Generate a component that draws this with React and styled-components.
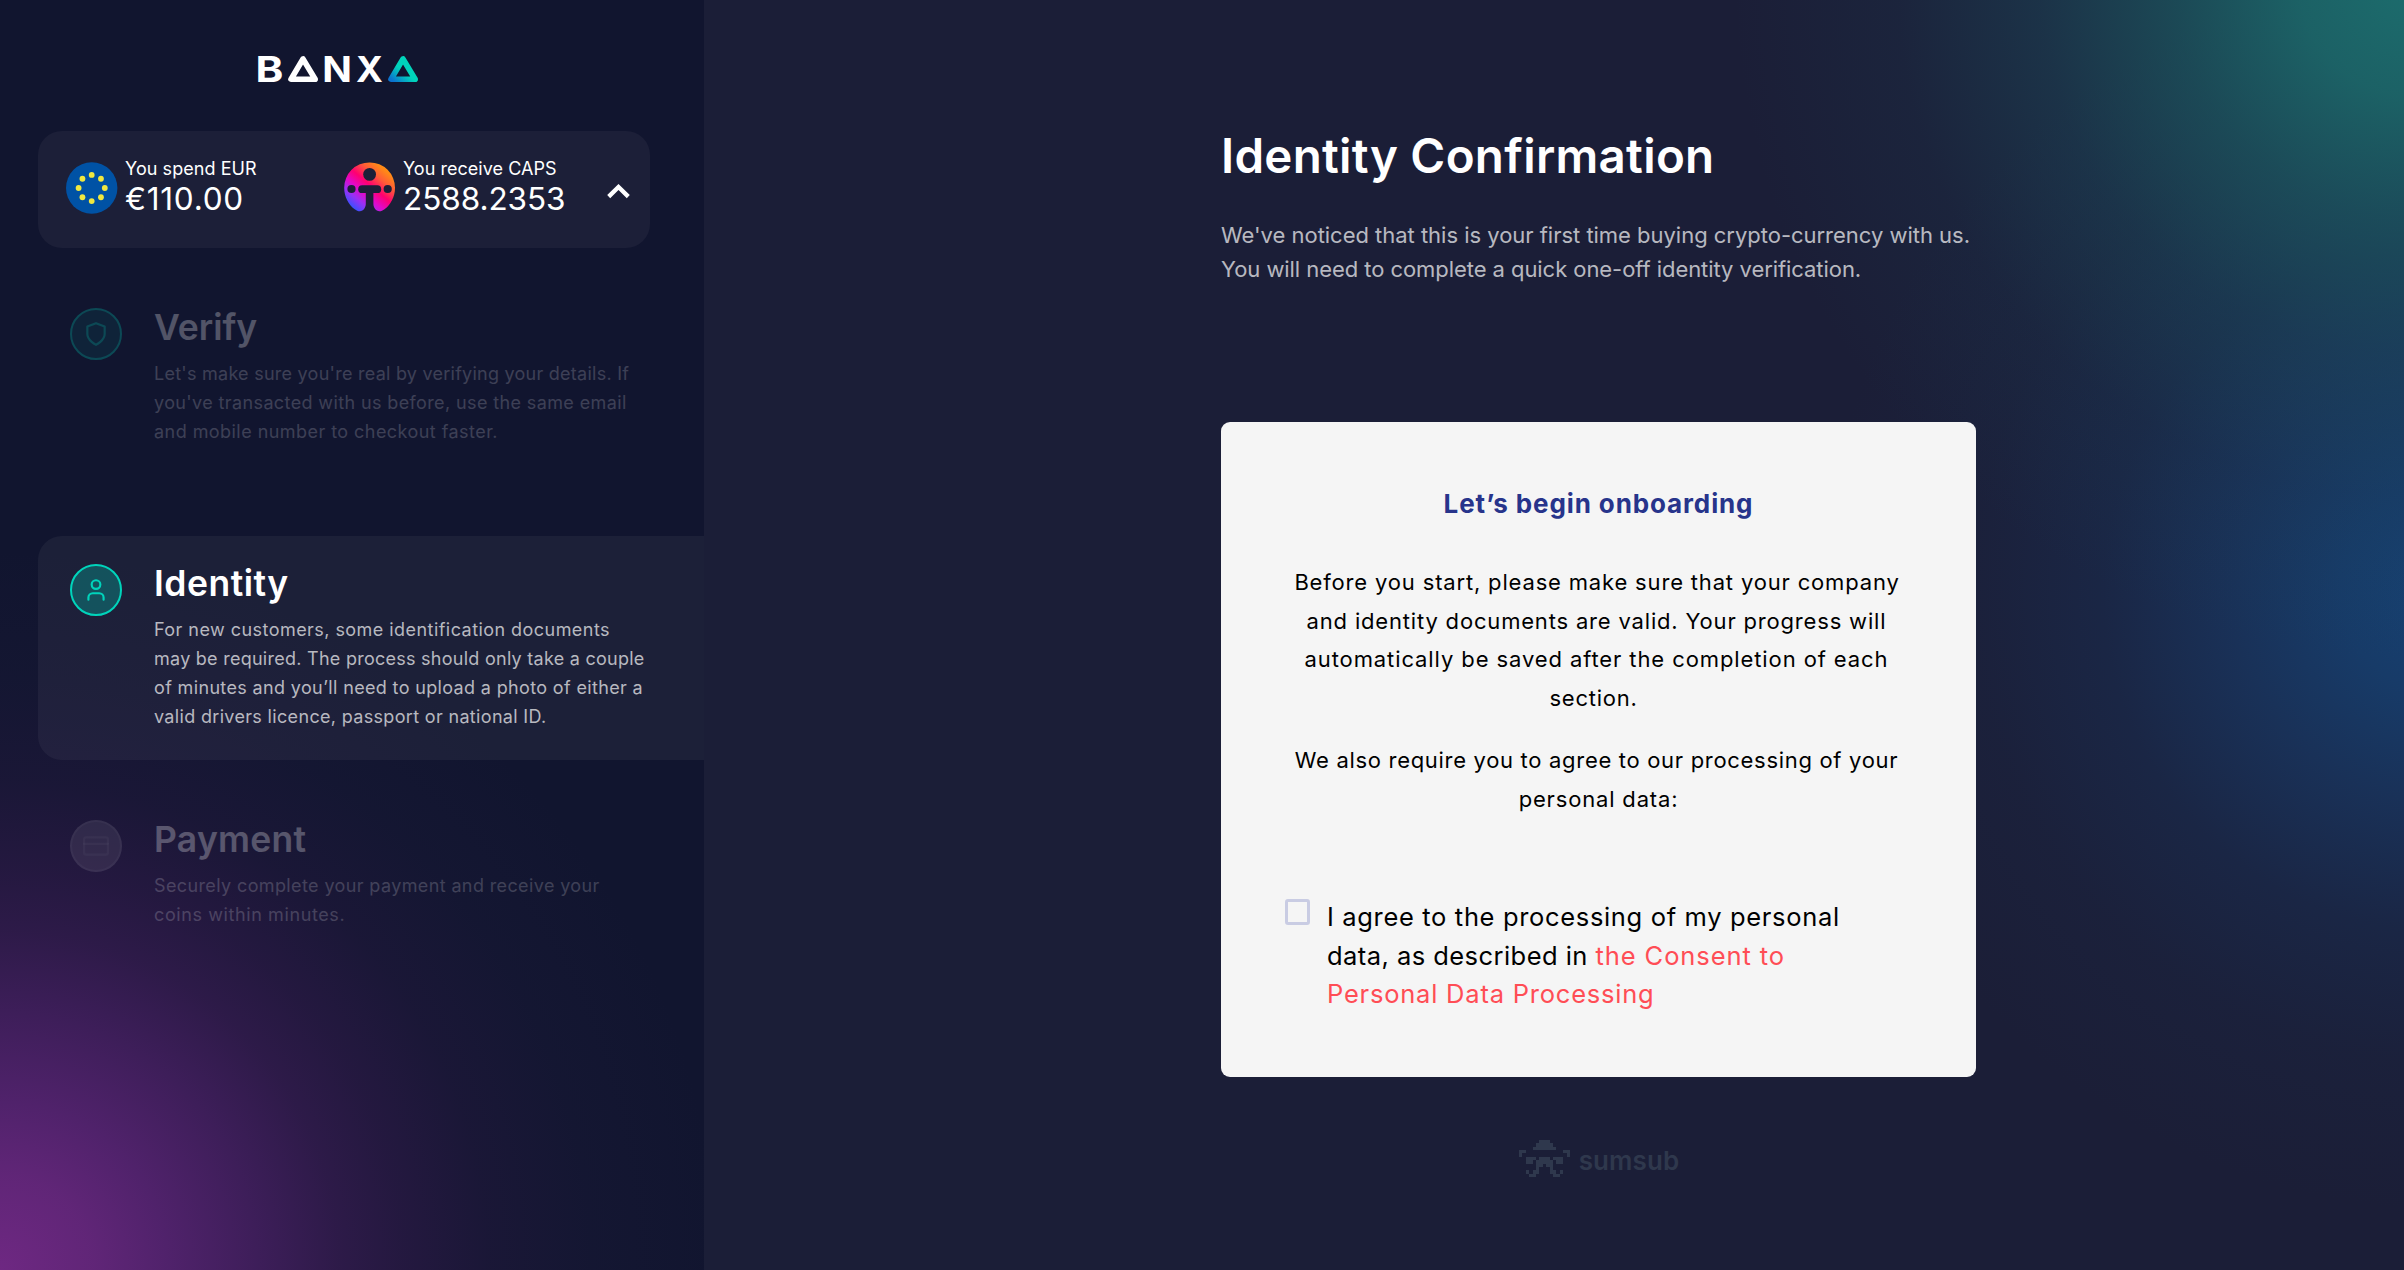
import React from "react";
import styled, { createGlobalStyle } from "styled-components";
import { User } from "lucide-react";

const GlobalStyle = createGlobalStyle`
  * { box-sizing: border-box; }
  body {
    margin: 0;
    background: #1b1e37;
    color: #fff;
    font-family: Inter, "Liberation Sans", sans-serif;
  }
  p, h1, h2 { margin: 0; }
`;

const Page = styled.div`
  display: flex;
  width: 100%;
  height: 1270px;
  overflow: hidden;
`;

const Sidebar = styled.aside`
  flex: 0 0 704px;
  padding: 56px 0 0 38px;
  background:
    radial-gradient(
      circle 720px at 0 1270px,
      rgba(110, 40, 130, 1) 0%,
      rgba(108, 40, 130, 0.87) 13%,
      rgba(104, 39, 130, 0.73) 23%,
      rgba(102, 38, 128, 0.5) 37%,
      rgba(98, 36, 120, 0.35) 47%,
      rgba(92, 34, 112, 0.25) 56%,
      rgba(80, 34, 100, 0.14) 68%,
      rgba(60, 40, 90, 0.07) 82%,
      rgba(60, 40, 90, 0) 100%
    ),
    #11152f;
`;

const Main = styled.main`
  flex: 1;
  padding: 126px 0 0 517px;
  background:
    radial-gradient(
      circle 680px at 1710px -20px,
      rgba(28, 110, 110, 0.98) 0%,
      rgba(28, 110, 110, 0.84) 17%,
      rgba(28, 104, 108, 0.58) 35%,
      rgba(28, 90, 104, 0.34) 55%,
      rgba(28, 70, 90, 0.15) 76%,
      rgba(28, 60, 80, 0) 100%
    ),
    radial-gradient(
      circle 620px at 1740px 590px,
      rgba(22, 68, 120, 0.92) 0%,
      rgba(22, 66, 116, 0.8) 17%,
      rgba(24, 62, 110, 0.57) 36%,
      rgba(24, 54, 96, 0.34) 55%,
      rgba(26, 46, 80, 0.16) 76%,
      rgba(27, 30, 55, 0) 100%
    ),
    #1b1e37;
`;

const Logo = styled.svg`
  display: block;
  margin: 0 0 49px 220px;
`;

const Summary = styled.section`
  display: grid;
  grid-template-columns: 278px 1fr auto;
  width: 612px;
  height: 117px;
  padding: 26px 20px 0 28px;
  margin-bottom: 32px;
  border-radius: 24px;
  background: #1c1f38;
`;

const Amount = styled.div`
  display: flex;
  gap: 7px;
  svg { display: block; flex: none; margin-top: 5px; }
`;

const AmountLabel = styled.div`
  font-size: 18px;
  line-height: 24px;
`;

const AmountValue = styled.div`
  font-size: 31.5px;
  line-height: 36px;
`;

const Chevron = styled.svg`
  margin-top: 27px;
`;

const Step = styled.section`
  display: flex;
  gap: 32px;
  height: 224px;
  padding: 26px 0 0 32px;
  margin-bottom: 32px;
  border-radius: 24px 0 0 24px;
  background: ${(p) => (p.$active ? "rgba(255, 255, 255, 0.047)" : "none")};
`;

const Faded = styled.div`
  display: contents;
  > * { opacity: ${(p) => (p.$active ? 1 : 0.27)}; }
`;

const StepIcon = styled.div`
  display: flex;
  align-items: center;
  justify-content: center;
  flex: none;
  width: 52px;
  height: 52px;
  margin-top: 2px;
  border-radius: 50%;
  color: ${(p) => (p.$muted ? "rgba(255,255,255,0.16)" : "#00d4bb")};
  border: 2px solid ${(p) => (p.$muted ? "rgba(255,255,255,0.16)" : "#00d4bb")};
  background: ${(p) => (p.$muted ? "rgba(255,255,255,0.3)" : "rgba(0,212,187,0.28)")};
`;

const StepTitle = styled.h2`
  font-size: 35.5px;
  line-height: 44px;
  font-weight: 600;
  margin-bottom: 9px;
`;

const StepText = styled.p`
  font-size: 18px;
  line-height: 29px;
  color: rgba(255, 255, 255, 0.69);
`;

const Line = styled.span`
  display: block;
  white-space: pre;
  letter-spacing: ${(p) => p.$track || 0}px;
  padding-right: ${(p) => p.$trail || 0}px;
`;

const Title = styled.h1`
  font-size: 47.5px;
  line-height: 60px;
  font-weight: 600;
  margin-bottom: 32px;
`;

const Intro = styled.p`
  font-size: 22px;
  line-height: 34px;
  color: rgba(255, 255, 255, 0.7);
`;

const Card = styled.section`
  width: 755px;
  height: 655px;
  margin-top: 136px;
  padding: 63px 64px 0;
  border-radius: 9px;
  background: #f5f5f5;
  color: #000;
`;

const CardTitle = styled.h2`
  font-size: 26px;
  line-height: 38px;
  font-weight: 700;
  text-align: center;
  color: #27348b;
  margin-bottom: 40px;
`;

const CardText = styled.p`
  font-size: 22px;
  line-height: 38.5px;
  text-align: center;
  margin-bottom: 24px;
`;

const Consent = styled.label`
  display: flex;
  gap: 17px;
  margin-top: 80px;
  font-size: 25.5px;
  line-height: 38.5px;
`;

const Checkbox = styled.span`
  flex: none;
  width: 25px;
  height: 26px;
  margin-top: 1px;
  border: 3px solid #c9cce3;
  border-radius: 3px;
`;

const ConsentLink = styled.span`
  color: #ff4d55;
  letter-spacing: ${(p) => p.$track}px;
`;

const Provider = styled.footer`
  display: flex;
  justify-content: center;
  gap: 9px;
  width: 755px;
  padding-left: 1px;
  margin-top: 63px;
  color: #2f384d;
`;

const ProviderName = styled.span`
  font-size: 26px;
  font-weight: 600;
  line-height: 42px;
`;

function BanxaLogo() {
  return (
    <Logo width="160" height="26" viewBox="0 0 160 26" overflow="visible">
      <defs>
        <linearGradient id="brand" x1="0" y1="1" x2="0.45" y2="0.55">
          <stop offset="0" stopColor="#0b72cf" />
          <stop offset="1" stopColor="#00d4bb" />
        </linearGradient>
      </defs>
      <g fill="#fff" fontFamily="Inter, sans-serif" fontWeight="700" fontSize="35.4">
        <text transform="translate(-2.6 25.8) scale(1.19 1)">B</text>
        <text transform="translate(64.2 25.8) scale(1.1 1)">N</text>
        <text transform="translate(98 25.8) scale(1.03 1)">X</text>
      </g>
      <path d="M45 3 L33 23.2 H57.2 Z" fill="none" stroke="#fff" strokeWidth="5.6" strokeLinejoin="round" />
      <path d="M145 3 L133 23.2 H157.2 Z" fill="none" stroke="url(#brand)" strokeWidth="5.6" strokeLinejoin="round" />
    </Logo>
  );
}

function EuroFlag() {
  const stars = Array.from({ length: 8 }, (_, i) => (i * Math.PI) / 4);
  return (
    <svg width="52" height="52" viewBox="0 0 52 52">
      <circle cx="25.7" cy="26" r="25.7" fill="#0052a5" />
      {stars.map((a) => (
        <circle key={a} cx={25.7 + 13.1 * Math.cos(a)} cy={26 + 13.1 * Math.sin(a)} r="2.9" fill="#f0e840" />
      ))}
    </svg>
  );
}

function CapsCoin() {
  return (
    <svg width="52" height="52" viewBox="0 0 52 52">
      <defs>
        <linearGradient id="coin" gradientUnits="userSpaceOnUse" x1="10" y1="47" x2="42" y2="9">
          <stop offset="0" stopColor="#3a50ff" />
          <stop offset="0.2" stopColor="#9a30f5" />
          <stop offset="0.38" stopColor="#e208c8" />
          <stop offset="0.58" stopColor="#ff0070" />
          <stop offset="0.8" stopColor="#ff5a38" />
          <stop offset="1" stopColor="#ff8a16" />
        </linearGradient>
      </defs>
      <path
        fill="url(#coin)"
        d="M25.6 0.4A25.3 25.3 0 0 1 51 25.9C51 34.5 46.8 42.5 40.5 47.2C37 50 33 50 30.8 46.5C29.7 44.8 29.4 43.5 29.4 41.5V31H21.8V41.5C21.8 43.5 21.5 44.8 20.4 46.5C18.2 50 14.2 50 10.7 47.2C4.4 42.5 0.2 34.5 0.2 25.9A25.3 25.3 0 0 1 25.6 0.4Z"
      />
      <g fill="#1c1f38">
        <circle cx="25.6" cy="12.4" r="6.4" />
        <rect x="14.2" y="23.3" width="23" height="7.8" rx="3.9" />
        <circle cx="7.5" cy="27" r="4.1" />
        <circle cx="43.7" cy="27" r="4.1" />
      </g>
    </svg>
  );
}

const stroke = {
  width: 26,
  height: 26,
  viewBox: "0 0 24 24",
  fill: "none",
  stroke: "currentColor",
  strokeWidth: 2,
  strokeLinecap: "round",
  strokeLinejoin: "round",
};

const ShieldIcon = () => (
  <svg {...stroke}>
    <path d="M12 22s8-4 8-10V5l-8-3-8 3v7c0 6 8 10 8 10z" />
  </svg>
);

const CardIcon = () => (
  <svg {...stroke}>
    <rect x="1" y="4" width="22" height="16" rx="2" />
    <path d="M1 10h22" />
  </svg>
);

// Mascot bitmap, one character per cell.
const MASCOT = [
  "......###......",
  ".....#####.....",
  "....#######....",
  "##...........##",
  "#.............#",
  "..###.###.###..",
  "..##.#####.##..",
  ".....##.##.....",
  ".....#...#.....",
  "..#.##...##.#..",
  "...##.....##...",
];

function Mascot() {
  return (
    <svg width="51" height="37" viewBox="0 0 15 11" preserveAspectRatio="none" fill="currentColor" shapeRendering="crispEdges">
      {MASCOT.flatMap((row, y) =>
        [...row].map((c, x) => (c === "#" ? <rect key={`${x}-${y}`} x={x} y={y} width="1" height="1" /> : null))
      )}
    </svg>
  );
}

const STEPS = [
  {
    title: "Verify",
    track: 0,
    icon: <ShieldIcon />,
    lines: [
      ["Let's make sure you're real by verifying your details. If", 0.25],
      ["you've transacted with us before, use the same email", 0.38],
      ["and mobile number to checkout faster.", 0.45],
    ],
  },
  {
    title: "Identity",
    track: 0.5,
    active: true,
    icon: <User size={26} strokeWidth={2} />,
    lines: [
      ["For new customers, some identification documents", 0.45],
      ["may be required. The process should only take a couple", 0.26],
      ["of minutes and you’ll need to upload a photo of either a", 0.35],
      ["valid drivers licence, passport or national ID.", 0.33],
    ],
  },
  {
    title: "Payment",
    track: 0.25,
    muted: true,
    icon: <CardIcon />,
    lines: [
      ["Securely complete your payment and receive your", 0.38],
      ["coins within minutes.", 0.6],
    ],
  },
];

const renderLines = (lines) =>
  lines.map(([text, track, trail]) => (
    <Line key={text} $track={track} $trail={trail}>
      {text}
    </Line>
  ));

export default function App() {
  return (
    <>
      <GlobalStyle />
      <Page>
        <Sidebar>
          <BanxaLogo />
          <Summary>
            <Amount>
              <EuroFlag />
              <div>
                <AmountLabel><Line $track={0.06}>You spend EUR</Line></AmountLabel>
                <AmountValue><Line $track={0.75}>€110.00</Line></AmountValue>
              </div>
            </Amount>
            <Amount>
              <CapsCoin />
              <div>
                <AmountLabel><Line $track={0.03}>You receive CAPS</Line></AmountLabel>
                <AmountValue><Line $track={-0.05}>2588.2353</Line></AmountValue>
              </div>
            </Amount>
            <Chevron width="23" height="15" viewBox="0 0 23 15">
              <path d="M1.7 12.6 L11.5 3 L21.3 12.6" fill="none" stroke="#fff" strokeWidth="4.3" />
            </Chevron>
          </Summary>
          {STEPS.map((s) => (
            <Step key={s.title} $active={s.active}>
              <Faded $active={s.active}>
                <StepIcon $muted={s.muted}>{s.icon}</StepIcon>
                <div>
                  <StepTitle><Line $track={s.track}>{s.title}</Line></StepTitle>
                  <StepText>{renderLines(s.lines)}</StepText>
                </div>
              </Faded>
            </Step>
          ))}
        </Sidebar>
        <Main>
          <Title><Line $track={0.28}>Identity Confirmation</Line></Title>
          <Intro>
            {renderLines([
              ["We've noticed that this is your first time buying crypto-currency with us.", -0.02],
              ["You will need to complete a quick one-off identity verification.", -0.06],
            ])}
          </Intro>
          <Card>
            <CardTitle><Line $track={0.88}>Let’s begin onboarding</Line></CardTitle>
            <CardText>
              {renderLines([
                ["Before you start, please make sure that your company", 0.83, 3],
                ["and identity documents are valid. Your progress will", 0.82, 4],
                ["automatically be saved after the completion of each", 0.9, 4],
                ["section.", 0.75, 10],
              ])}
            </CardText>
            <CardText>
              {renderLines([
                ["We also require you to agree to our processing of your", 0.69, 4],
                ["personal data:", 0.83],
              ])}
            </CardText>
            <Consent>
              <Checkbox />
              <span>
                <Line $track={0.66}>I agree to the processing of my personal</Line>
                <Line $track={0.45}>
                  {"data, as described in "}
                  <ConsentLink $track={0.92}>the Consent to</ConsentLink>
                </Line>
                <Line>
                  <ConsentLink $track={0.78}>Personal Data Processing</ConsentLink>
                </Line>
              </span>
            </Consent>
          </Card>
          <Provider>
            <Mascot />
            <ProviderName><Line $track={0.1}>sumsub</Line></ProviderName>
          </Provider>
        </Main>
      </Page>
    </>
  );
}
